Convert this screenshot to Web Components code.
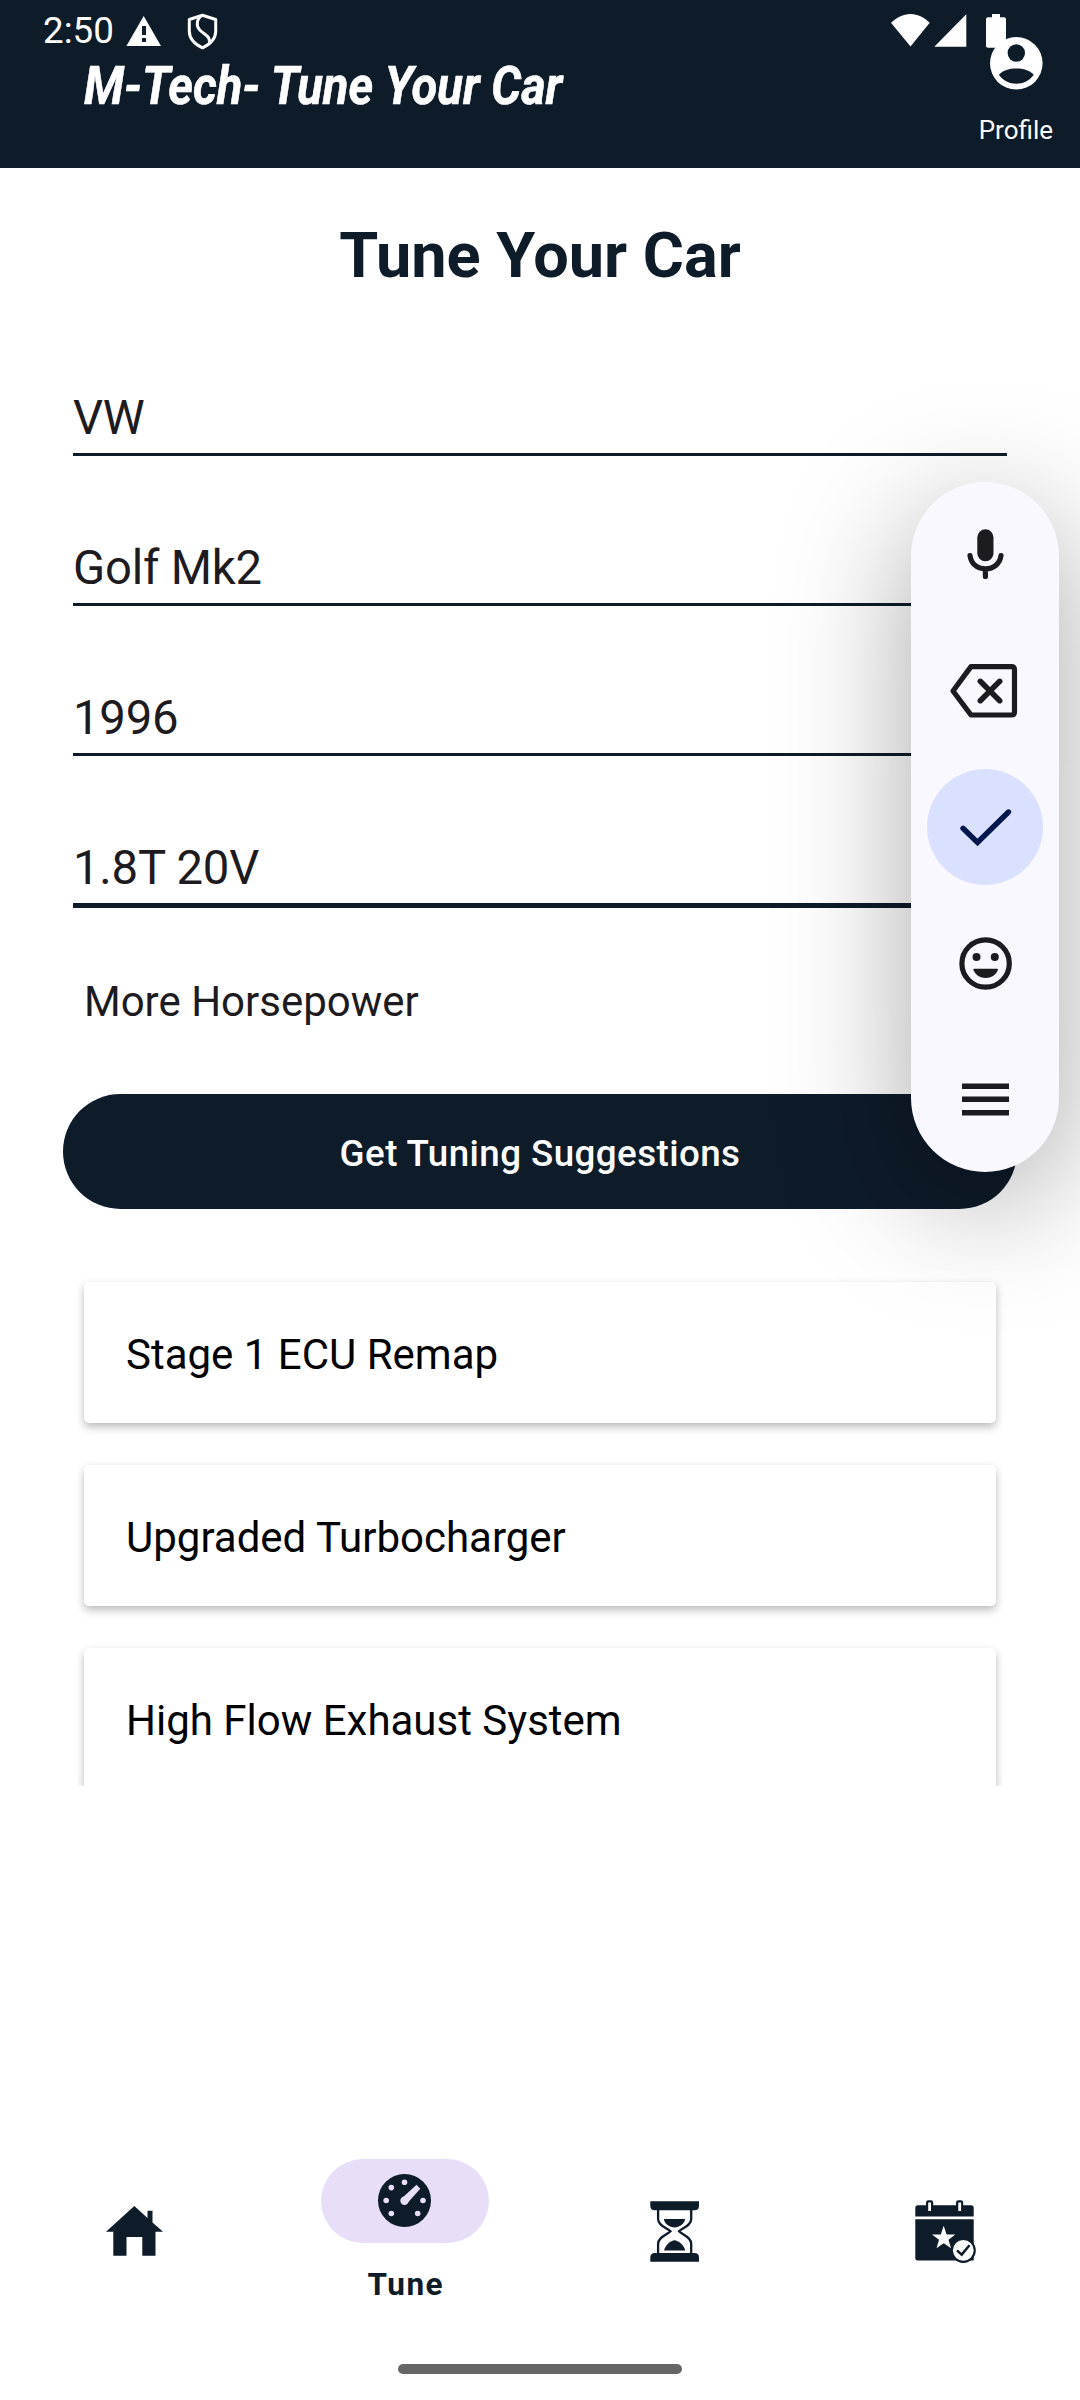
<!DOCTYPE html>
<html lang="en">
<head>
<meta charset="utf-8">
<title>M-Tech</title>
<style>
html,body{margin:0;background:#fff}
body{width:1080px;height:2400px;overflow:hidden;font-family:Roboto,sans-serif}
</style>
</head>
<body>
<tune-app></tune-app>
<script>
const define = (name, html) => customElements.define(name, class extends HTMLElement {
  constructor() {
    super();
    this.attachShadow({mode: 'open'}).innerHTML = html;
  }
});

define('status-bar', `
<style>
:host{display:flex;height:62px;align-items:center;padding:0 74px 0 43px;box-sizing:border-box;color:#fff}
.time{width:71px;font-size:36.750px;line-height:62px;white-space:nowrap}
svg{display:block;fill:#fff}
.warn{margin-left:12px}.shield{margin-left:24.500px}
.wifi{margin-left:auto}.cell{margin-left:4px}.bat{margin-left:19px}
</style>
<div class="time">2:50</div>
<svg class="warn" width="36" height="62" viewBox="0 0 36 62"><path fill-rule="evenodd" d="M17.700 16 35 46H.4ZM16 26v9h4v-9ZM16 38v4h4v-4Z"/></svg>
<svg class="shield" width="32" height="62" viewBox="0 0 32 62"><g fill="none" stroke="#fff" stroke-width="3" stroke-linejoin="round"><path d="M15.500 15.300 28.700 19.500v11.500c0 8-6 13.500-13.200 16.800C8.300 44.500 2.300 39 2.300 31V19.500Z"/><path d="M15.500 15.300C9.500 18.500 8.700 26 13 30.200C18 35 23.500 36 22.500 43.500"/></g></svg>
<svg class="wifi" width="39" height="62" viewBox="0 0 39 62"><path d="M0 22.800C5.500 17.500 12 14 19.500 14S33.500 17.500 38.700 22.800L19.500 46.600Z"/></svg>
<svg class="cell" width="33" height="62" viewBox="0 0 33 62"><path d="M32.300 14.300V46.700H.3Z"/></svg>
<svg class="bat" width="20" height="62" viewBox="0 0 20 62"><path d="M6 14h8v3.300h4q2 0 2 2V45.700q0 2-2 2H2q-2 0-2-2V19.300q0-2 2-2H6Z"/></svg>`);

define('profile-action', `
<style>
:host{display:flex;flex-direction:column;align-items:center;color:#fff;font-size:26px}
svg{display:block}
.l{line-height:30px;margin-top:25px}
</style>
<svg width="54" height="54" viewBox="0 0 54 54"><circle cx="27.300" cy="27.300" r="26.300" fill="#fff"/><circle cx="27.300" cy="17" r="8.700" fill="#0e1b29"/><path fill="#0e1b29" d="M9.800 38.800C14.300 34.100 20.300 32.500 27.300 32.500s13 1.600 17.500 6.300C40.300 44.800 34.300 47.800 27.300 47.800S14.300 44.800 9.800 38.800Z"/></svg>
<div class="l"><slot></slot></div>`);

define('app-header', `
<style>
:host{display:block;height:168px;background:#0e1b29}
.bar{display:flex;justify-content:space-between;height:106px;padding:0 27px 0 84px}
.t{margin:-12px 0 0;font:italic 700 53px/72px Roboto,sans-serif;color:#fff;white-space:nowrap;width:480px;-webkit-text-stroke:.6px #fff}
.t span{display:inline-block;transform:scaleX(.889);transform-origin:0 50%}
profile-action{margin-top:-26px}
</style>
<status-bar></status-bar>
<div class="bar"><div class="t"><span><slot></slot></span></div><profile-action>Profile</profile-action></div>`);

define('text-field', `
<style>
:host{display:flex;flex-direction:column;height:150px;box-sizing:border-box;justify-content:flex-end;font-size:47.250px;letter-spacing:-.22px;color:#1d1b20}
.v{line-height:56px;padding-bottom:7px}
.u{height:3px;background:#0e1b29;margin-bottom:2px}
:host([active]) .u{height:5px;margin-bottom:0}
</style>
<div class="v"><slot></slot></div><div class="u"></div>`);

define('pill-button', `
<style>
:host{display:flex;align-items:center;justify-content:center;height:115px;border-radius:58px;background:#0e1b29;color:#fff;font-weight:500;font-size:36.750px;letter-spacing:.42px;padding-top:3px;box-sizing:border-box}
</style><slot></slot>`);

define('result-card', `
<style>
:host{display:flex;align-items:center;height:141px;flex:none;box-sizing:border-box;padding:4px 43px 0 42px;background:#fff;border-radius:5px;font-size:42px;color:#000;box-shadow:0 4px 8px rgba(0,0,0,.27)}
</style><slot></slot>`);

define('input-toolbar', `
<style>
:host{display:flex;flex-direction:column;gap:20.200px;align-items:center;box-sizing:border-box;width:148px;height:690px;padding:14.600px 0;border-radius:74px;background:#f9f8ff;box-shadow:0 30px 128px rgba(0,0,0,.35)}
div{width:116px;height:116px;border-radius:50%;flex:none}
.on{background:#dae1ff}
svg{display:block;width:116px;height:116px}
.s{fill:none;stroke:#1b1b20;stroke-width:5.200;stroke-linecap:round;stroke-linejoin:round}
.f{fill:#1b1b20}
</style>
<div><svg viewBox="0 0 116 116"><rect class="f" x="50.300" y="32.300" width="16.200" height="32" rx="8.100"/><path class="s" d="M43 58.500C44 66.500 50 71.800 58.400 71.800S73 66.500 74 58.500M58.400 72v7.500"/></svg></div>
<div><svg viewBox="0 0 116 116"><path class="s" d="M44 33.600H84.500q3 0 3 3V79q0 3-3 3H44L26 58Z"/><path class="s" style="stroke-width:5.500" d="M53.300 48.300 72.700 67.700M72.700 48.300 53.300 67.700"/></svg></div>
<div class="on"><svg viewBox="0 0 116 116"><path class="s" style="stroke:#00164e;stroke-width:5.400;stroke-linejoin:miter" d="M36 59.300 50.500 73.500 81.500 43"/></svg></div>
<div><svg viewBox="0 0 116 116"><circle class="s" cx="58.600" cy="58.500" r="23.700"/><circle class="f" cx="49.500" cy="52.100" r="4"/><circle class="f" cx="67.800" cy="52.100" r="4"/><path class="f" d="M47.200 63.700H70.200q1.200 0 .7 1.200C68.700 70 64.200 72.900 58.600 72.900S48.700 70 46.400 64.900Q46 63.700 47.200 63.700Z"/></svg></div>
<div><svg viewBox="0 0 116 116"><path class="f" d="M35 42.400h47v5.500H35ZM35 55.600h47v5.500H35ZM35 68.900h47v5.500H35Z"/></svg></div>`);

define('nav-item', `
<style>
:host{display:flex;flex-direction:column;align-items:center;width:270px;padding-top:72px;box-sizing:border-box;color:#0e1b29}
:host([active]){padding-top:41px}
.i{display:flex;align-items:center;justify-content:center;width:168px;height:84px;border-radius:42px}
:host([active]) .i{background:#e8def8}
.l{font-weight:700;font-size:31.500px;letter-spacing:1.500px;line-height:38px;margin-top:23px;padding-left:1.500px}
</style>
<div class="i"><slot name="icon"></slot></div><div class="l"><slot></slot></div>`);

define('tune-app', `
<style>
:host{display:flex;flex-direction:column;width:1080px;height:2400px;position:relative;overflow:hidden;background:#fff}
h1{margin:51px 0 0;text-align:center;font-size:63px;line-height:74px;font-weight:700;color:#0e1b29}
.fields{display:flex;flex-direction:column;margin:15px 73px 0}
.goal{margin:69px 0 0 84px;font-size:42px;line-height:50px;color:#1d1b20}
pill-button{margin:67px 63px 0}
.list{display:flex;flex-direction:column;gap:42px;margin:61px 0 0;padding:12px 84px 0;height:516px;flex:none;box-sizing:border-box;overflow:hidden}
nav{display:flex;flex:none;margin-top:auto;height:246px}
nav svg{display:block;fill:#0e1b29}
.home{display:flex;flex:none;justify-content:center;height:36px}
.home i{width:284px;height:10px;border-radius:5px;background:#666}
input-toolbar{position:absolute;left:911px;top:482px}
</style>
<app-header>M-Tech- Tune Your Car</app-header>
<h1>Tune Your Car</h1>
<div class="fields">
<text-field>VW</text-field><text-field>Golf Mk2</text-field><text-field>1996</text-field><text-field active>1.8T 20V</text-field>
</div>
<div class="goal">More Horsepower</div>
<pill-button>Get Tuning Suggestions</pill-button>
<div class="list">
<result-card>Stage 1 ECU Remap</result-card><result-card>Upgraded Turbocharger</result-card><result-card>High Flow Exhaust System</result-card>
</div>
<nav>
<nav-item><svg slot="icon" width="64" height="64" viewBox="0 0 64 64"><path d="M31.300 6 44.500 18V10.700H49.500V22.500L60 31.700H52.500V55.800H39.300V37H23.500V55.800H10.300V31.700H3Z"/></svg></nav-item>
<nav-item active><svg slot="icon" width="64" height="64" viewBox="0 0 64 64"><circle cx="31.500" cy="31.500" r="26.500"/><g fill="#e8def8"><circle cx="31.500" cy="13.200" r="2.800"/><circle cx="18.300" cy="18.600" r="2.800"/><circle cx="13.200" cy="31.500" r="2.800"/><circle cx="18.300" cy="44.500" r="2.800"/><circle cx="44.700" cy="44.500" r="2.800"/><circle cx="50" cy="31.500" r="2.800"/><circle cx="31.500" cy="31.800" r="4.200"/><path d="M28.500 29.500 43.500 15.800 47.300 19.800 34.500 34Z"/></g></svg>Tune</nav-item>
<nav-item><svg slot="icon" width="64" height="64" viewBox="0 0 64 64"><path d="M7.300 1.300H56V5.800q0 4.500-4.500 4.500H11.800Q7.300 10.300 7.300 5.800ZM11.800 53H51.500q4.500 0 4.500 4.500V61.800H7.300V57.500q0-4.500 4.500-4.500Z"/><path fill="none" stroke="#0e1b29" stroke-width="2.300" d="M15.100 10V19C15.100 26 24 27.500 27.500 31.300C24 35 15.100 37 15.100 44V53M48.200 10V19C48.200 26 39.500 27.500 36 31.300C39.500 35 48.200 37 48.200 44V53"/><path d="M21 19H42C42 23.700 36 27.500 31.500 27.500S21 23.700 21 19ZM21 50.500C22.500 45 28 40.500 31.500 40.300C35 40.500 41 45 42.300 50.500Z"/></svg></nav-item>
<nav-item><svg slot="icon" width="64" height="64" viewBox="0 0 64 64"><path d="M2.300 16.500V8Q2.300 5.300 5 5.300H58Q60.700 5.300 60.700 8V16.500ZM2.300 19.200H60.700V60.500H5Q2.300 60.500 2.300 58Z"/><path d="M13 6V2.500q0-2.300 2.300-2.300h2.600q2.300 0 2.300 2.300V6ZM43 6V2.500q0-2.300 2.300-2.300h2.600q2.300 0 2.300 2.300V6Z"/><path fill="#fff" d="M15.200 2.500h2.800v8.500h-2.800ZM45.300 2.500h2.800v8.500h-2.800ZM30.700 25.700 33.600 34.400H42.300L35.500 39.700 38 48.200 30.700 43.200 23.500 48.200 26 39.700 19 34.400H27.800Z"/><circle cx="50.300" cy="50.500" r="12.500"/><circle cx="50.300" cy="50.300" r="10.400" fill="#fff"/><path fill="none" stroke="#0e1b29" stroke-width="2.500" d="M44 50.300 48.700 54.600 56.500 45.300"/></svg></nav-item>
</nav>
<div class="home"><i></i></div>
<input-toolbar></input-toolbar>`);
</script>
</body>
</html>
